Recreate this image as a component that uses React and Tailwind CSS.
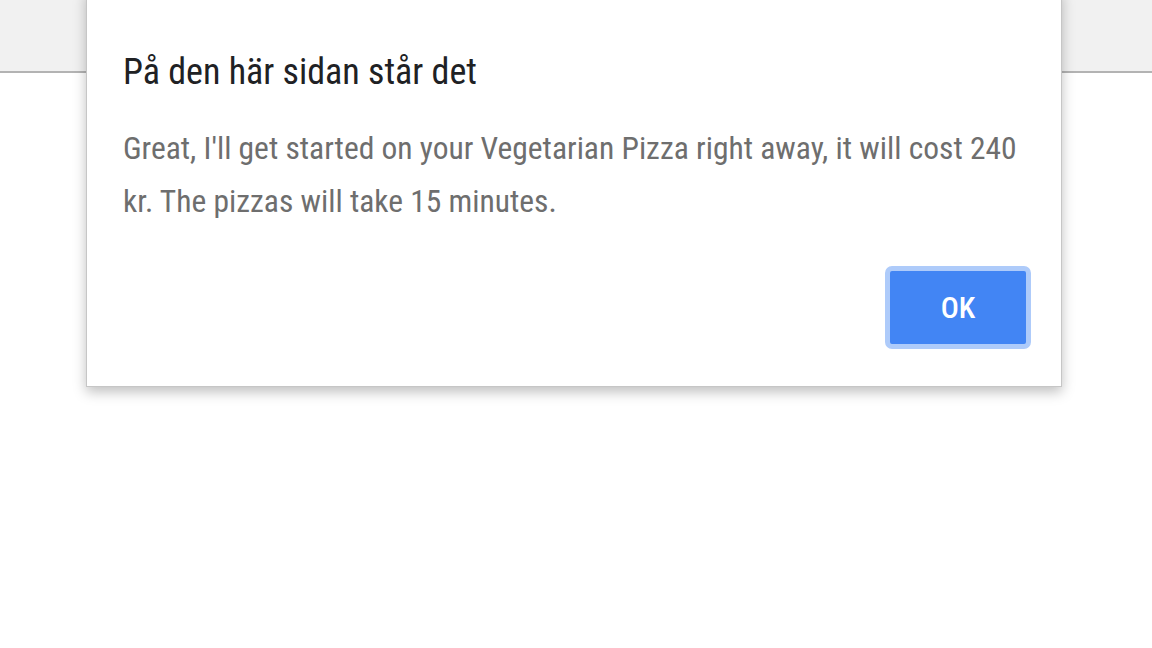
const font = { fontFamily: '"Roboto Condensed", "Roboto", sans-serif' };

function AlertDialog() {
    return (
        <div
            className="absolute left-[86px] top-[-10px] w-[976px] bg-white border border-[#c6c6c6] shadow-[0_5px_12px_rgba(0,0,0,0.25)] pl-[36px] pr-[30px] pt-[57px] pb-[37px]"
            style={font}
        >
            <h1 className="text-[36px] leading-[48px] text-[#202124] font-normal">På den här sidan står det</h1>
            <p className="mt-[26px] text-[31.5px] leading-[53px] text-[#6e6e6e]">
                Great, I'll get started on your Vegetarian Pizza right away, it will cost 240 kr. The pizzas will take 15 minutes.
            </p>
            <div className="flex justify-end mt-[38px]">
                <button className="w-[146px] h-[83px] rounded-[7px] border-[5px] border-[#aecbfa] bg-[#4285f4] text-white text-[30px] font-medium">
                    OK
                </button>
            </div>
        </div>
    );
}

export default function App() {
    return (
        <div className="relative w-[1152px] h-[648px] bg-white overflow-hidden">
            <div className="h-[73px] bg-[#f1f1f1] border-b-2 border-[#b3b3b3]"></div>
            <AlertDialog />
        </div>
    );
}
